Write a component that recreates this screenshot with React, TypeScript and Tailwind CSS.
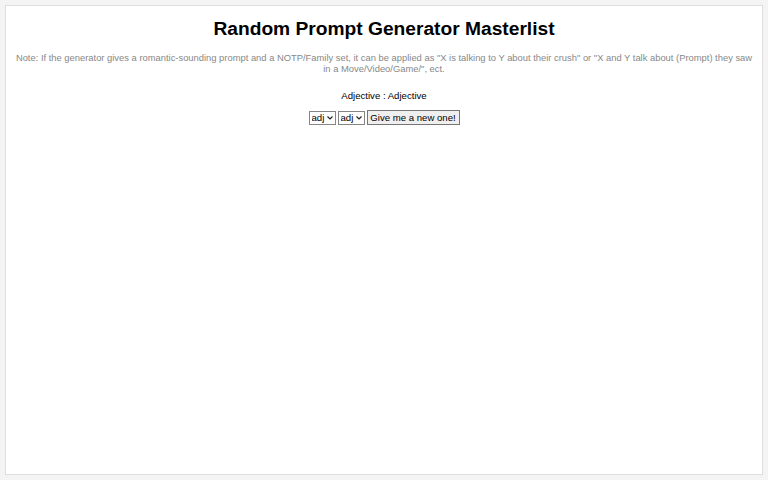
function AdjSelect() {
  return (
    <span className="relative inline-flex">
      <select className="appearance-none h-[14px] w-[27px] pl-[2px] pr-[9px] border border-[#858585] bg-white text-[9.6px] leading-[12px] text-black">
        <option>adj</option>
      </select>
      <svg className="pointer-events-none absolute right-[3px] top-[5px] w-[6px] h-[4px]" viewBox="0 0 6 4" fill="none">
        <path d="M0.5 0.5 L3 3 L5.5 0.5" stroke="#222" strokeWidth="1.2" />
      </svg>
    </span>
  );
}

export default function App() {
  return (
    <main className="min-h-screen bg-[#f4f4f4] p-[5px] font-['Liberation_Sans',Arial,sans-serif]">
      <div className="h-[470px] bg-white border border-[#dedede] px-[6px] text-center">
        <h1 className="pt-[12px] text-[19.2px] leading-[22px] font-bold text-black">Random Prompt Generator Masterlist</h1>
        <p className="mt-[12px] text-[9.4px] leading-[11px] text-[#888]">
          Note: If the generator gives a romantic-sounding prompt and a NOTP/Family set, it can be applied as "X is talking to Y about their crush" or "X and Y talk about (Prompt) they saw in a Move/Video/Game/", ect.
        </p>
        <p className="mt-[16px] text-[9.6px] leading-[12px] text-black">Adjective : Adjective</p>
        <div className="mt-[8px] flex justify-center items-center gap-[2px]">
          <AdjSelect />
          <AdjSelect />
          <button className="h-[15px] w-[93px] border border-[#767676] bg-[#efefef] text-[9.6px] leading-none text-black">Give me a new one!</button>
        </div>
      </div>
    </main>
  );
}
